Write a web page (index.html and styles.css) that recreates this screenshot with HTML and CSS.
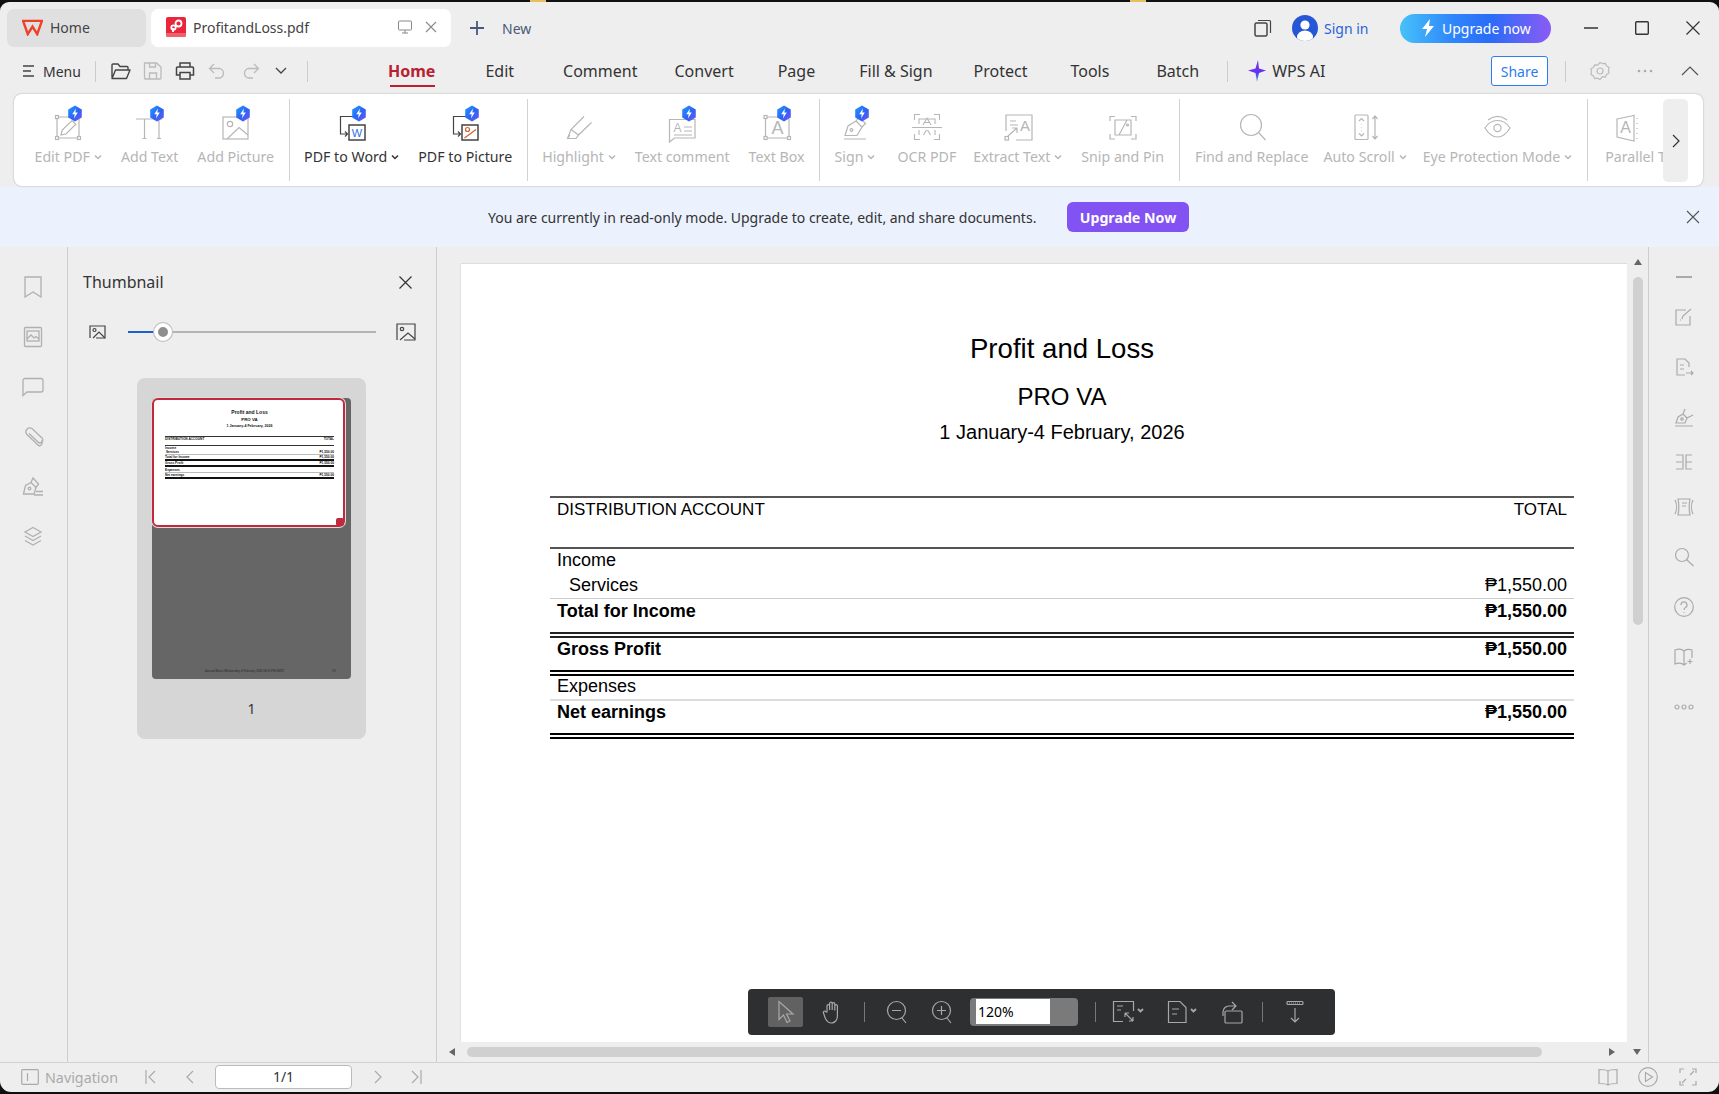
FILE: index.html
```html
<!DOCTYPE html>
<html lang="en">
<head>
<meta charset="utf-8">
<title>ProfitandLoss.pdf</title>
<link rel="stylesheet" href="styles.css">
</head>
<body>
<svg class="defs" width="0" height="0" aria-hidden="true">
  <defs>
    <linearGradient id="gb" x1="0" y1="0" x2="1" y2="1"><stop offset="0" stop-color="#1f9bff"/><stop offset=".55" stop-color="#2c62f5"/><stop offset="1" stop-color="#7a55f2"/></linearGradient>
    <linearGradient id="gai" x1="0" y1="0" x2="0" y2="1"><stop offset="0" stop-color="#8a2be8"/><stop offset=".6" stop-color="#5b35ee"/><stop offset="1" stop-color="#35b8f5"/></linearGradient>
    <symbol id="badge" viewBox="0 0 16 17"><path d="M8 .5 14.8 4.4v8.2L8 16.500 1.200 12.600V4.400z" fill="url(#gb)"/><path d="M9 3.500 5.200 9.300h2.500L7 13.500l3.800-5.900H8.300z" fill="#fff"/></symbol>
    <symbol id="caret" viewBox="0 0 8 6"><path d="M1 1.500 4 4.500 7 1.500" fill="none" stroke="currentColor" stroke-width="1.500"/></symbol>
  </defs>
</svg>
<div class="strip"></div>
<div class="window">
  <header class="titlebar">
    <div class="tab tab-home">
      <svg class="tab-logo" viewBox="0 0 22 18"><path d="M1 2h20l-5 14-5-8-5 8z" fill="none" stroke="#f0412b" stroke-width="2.600" stroke-linejoin="miter"/></svg>
      <span>Home</span>
    </div>
    <div class="tab tab-doc">
      <svg class="tab-pdf" viewBox="0 0 20 20"><rect width="20" height="20" rx="2" fill="#e8273c"/><path d="M0 16h20v2a2 2 0 0 1-2 2H2a2 2 0 0 1-2-2z" fill="#f2606e"/><circle cx="12.500" cy="6.500" r="3" fill="none" stroke="#fff" stroke-width="1.800"/><circle cx="7.500" cy="10.500" r="2.200" fill="none" stroke="#fff" stroke-width="1.800"/><path d="M7 15V11" stroke="#fff" stroke-width="1.800"/></svg>
      <span class="tab-name">ProfitandLoss.pdf</span>
      <svg class="tab-mon" viewBox="0 0 14 14"><rect x=".5" y="1" width="13" height="9" rx="1" fill="none" stroke="#888"/><path d="M7 10v3M4 13h6" stroke="#888"/></svg>
      <svg class="tab-x" viewBox="0 0 12 12"><path d="M1 1l10 10M11 1 1 11" stroke="#888" stroke-width="1.100"/></svg>
    </div>
    <svg class="plus" viewBox="0 0 14 14"><path d="M7 0v14M0 7h14" stroke="#46597c" stroke-width="1.800"/></svg>
    <span class="new">New</span>
    <div class="spacer"></div>
    <svg class="tb-copy" viewBox="0 0 18 18"><rect x="1" y="4" width="12" height="13" rx="1.500" fill="none" stroke="#444" stroke-width="1.500"/><path d="M4 1.500h11.500a1 1 0 0 1 1 1V14" fill="none" stroke="#444" stroke-width="1.200"/></svg>
    <svg class="tb-user" viewBox="0 0 26 26"><defs><clipPath id="uc"><circle cx="13" cy="13" r="13"/></clipPath></defs><circle cx="13" cy="13" r="13" fill="#2456d6"/><g clip-path="url(#uc)"><circle cx="13" cy="10" r="4.600" fill="#fff"/><ellipse cx="13" cy="22" rx="8" ry="6.500" fill="#fff"/></g></svg>
    <span class="signin">Sign in</span>
    <div class="upgrade">
      <svg class="bolt" viewBox="0 0 14 18"><path d="M9 0 1 10h5l-2 8 9-11H8z" fill="#fff"/></svg>
      <span>Upgrade now</span>
    </div>
    <svg class="win win-min" viewBox="0 0 14 14"><path d="M0 7h14" stroke="#333" stroke-width="1.300"/></svg>
    <svg class="win win-max" viewBox="0 0 14 14"><rect x=".7" y=".7" width="12.600" height="12.600" rx="1" fill="none" stroke="#333" stroke-width="1.400"/></svg>
    <svg class="win win-close" viewBox="0 0 14 14"><path d="M.5.5l13 13M13.500.5l-13 13" stroke="#333" stroke-width="1.200"/></svg>
  </header>

  <nav class="menubar">
    <svg class="m-burger" viewBox="0 0 11 12"><path d="M0 1h11M0 6h8M0 11h11" stroke="#444" stroke-width="1.300"/></svg>
    <span class="m-menu">Menu</span>
    <i class="vsep vsep-a"></i>
    <svg class="q q-folder" viewBox="0 0 20 17"><path d="M1 15V2.500a1 1 0 0 1 1-1h5l2 2.500h7a1 1 0 0 1 1 1V7M1 16h14.500L19 7.500H4.500L1 16z" fill="none" stroke="#444" stroke-width="1.400" stroke-linejoin="round"/></svg>
    <svg class="q q-save" viewBox="0 0 20 18"><path d="M1.500 1h12L18 5v11a1 1 0 0 1-1 1H2.500a1 1 0 0 1-1-1zM6.500 17v-6h7v6M6.500 1v4h6V1" fill="none" stroke="#bbb" stroke-width="1.300"/></svg>
    <svg class="q q-print" viewBox="0 0 20 18"><path d="M5 5V1h10v4M5 13H1.500V6a1 1 0 0 1 1-1h15a1 1 0 0 1 1 1v7H15M5 10.500h10V17H5z" fill="none" stroke="#444" stroke-width="1.500"/></svg>
    <svg class="q q-undo" viewBox="0 0 20 16"><path d="M6 1 1.500 5.500 6 10M2 5.500h10a5 5 0 0 1 0 9.500H7" fill="none" stroke="#bbb" stroke-width="1.300"/></svg>
    <svg class="q q-redo" viewBox="0 0 20 16"><path d="M14 1l4.500 4.500L14 10M18 5.500H8a5 5 0 0 0 0 9.500h5" fill="none" stroke="#bbb" stroke-width="1.300"/></svg>
    <svg class="q q-chev" viewBox="0 0 12 8"><path d="M1 1l5 5 5-5" fill="none" stroke="#444" stroke-width="1.300"/></svg>
    <i class="vsep vsep-b"></i>
    <div class="tabs">
      <span class="mt mt-on">Home</span>
      <span class="mt">Edit</span>
      <span class="mt">Comment</span>
      <span class="mt">Convert</span>
      <span class="mt">Page</span>
      <span class="mt">Fill &amp; Sign</span>
      <span class="mt">Protect</span>
      <span class="mt">Tools</span>
      <span class="mt">Batch</span>
    </div>
    <i class="vsep vsep-c"></i>
    <svg class="ai-star" viewBox="0 0 18 22"><path d="M10 0 11 8.500 18 10.500 11 13 9 22 7.500 13 0 10.500 7.500 8.500z" fill="url(#gai)"/></svg>
    <span class="ai-txt">WPS AI</span>
    <div class="spacer"></div>
    <span class="share">Share</span>
    <i class="vsep vsep-d"></i>
    <svg class="m-gear" viewBox="0 0 20 20"><path d="M10 1.500l2.500 1.200 2.800-.3 1.300 2.500 2.400 1.500-.5 2.800.5 2.800-2.400 1.500-1.300 2.500-2.800-.3L10 18.500l-2.500-1.300-2.800.3-1.300-2.500L1 13.500l.5-2.800L1 7.900l2.400-1.500 1.300-2.500 2.800.3z" fill="none" stroke="#bbb" stroke-width="1.200"/><circle cx="10" cy="10" r="3" fill="none" stroke="#bbb" stroke-width="1.200"/></svg>
    <svg class="m-dots" viewBox="0 0 16 4"><circle cx="2" cy="2" r="1.300" fill="#aaa"/><circle cx="8" cy="2" r="1.300" fill="#aaa"/><circle cx="14" cy="2" r="1.300" fill="#aaa"/></svg>
    <svg class="m-up" viewBox="0 0 18 10"><path d="M1 9l8-8 8 8" fill="none" stroke="#555" stroke-width="1.200"/></svg>
  </nav>

  <section class="ribbon">
    <div class="rb-list">
      <div class="rb dis">
        <div class="rb-ic"><svg viewBox="0 0 32 32"><path d="M6 6h20M6 27h20M5 8v17M27 8v17"/><rect x="3.500" y="4.500" width="3" height="3"/><rect x="3.500" y="25.500" width="3" height="3"/><rect x="25.500" y="25.500" width="3" height="3"/><path d="M9 24l1.200-5L20 9.500l3.800 3.800L14 23z"/></svg><svg class="badge"><use href="#badge"/></svg></div>
        <span class="rb-t">Edit PDF <svg class="car"><use href="#caret"/></svg></span>
      </div>
      <div class="rb dis">
        <div class="rb-ic"><svg viewBox="0 0 32 32"><path d="M2 8h26M10.500 8v19M25 8v19M8.500 27.500h4M23 27.500h4"/></svg><svg class="badge"><use href="#badge"/></svg></div>
        <span class="rb-t">Add Text</span>
      </div>
      <div class="rb dis">
        <div class="rb-ic"><svg viewBox="0 0 32 32"><rect x="3" y="6" width="25" height="22"/><circle cx="10" cy="13" r="2.700"/><path d="M7 28 19 16.500 28 24"/></svg><svg class="badge"><use href="#badge"/></svg></div>
        <span class="rb-t">Add Picture</span>
      </div>
      <i class="rb-sep"></i>
      <div class="rb act">
        <div class="rb-ic"><svg viewBox="0 0 32 32"><path d="M17 5.500H4.500V23H11M9 20.500l2.500 2.500L9 25.500"/><rect x="13" y="14" width="16" height="15" stroke-width="1.500"/><text class="ic-w" x="21" y="25.500">W</text></svg><svg class="badge"><use href="#badge"/></svg></div>
        <span class="rb-t">PDF to Word <svg class="car"><use href="#caret"/></svg></span>
      </div>
      <div class="rb act">
        <div class="rb-ic"><svg viewBox="0 0 32 32"><path d="M17 5.500H4.500V23H11M9 20.500l2.500 2.500L9 25.500"/><rect x="13" y="14" width="16" height="15" stroke-width="1.500"/><circle class="ic-o" cx="18.500" cy="18.500" r="2"/><path class="ic-o" d="M15.500 27 27 18.500"/></svg><svg class="badge"><use href="#badge"/></svg></div>
        <span class="rb-t">PDF to Picture</span>
      </div>
      <i class="rb-sep"></i>
      <div class="rb dis">
        <div class="rb-ic"><svg viewBox="0 0 32 32"><path d="M21 5.500 8 18.500 4.500 27.500H13l2.500-3.500L28.500 11.500M8 18.500l7.500 5.500M7 24l-2.500 3.500"/></svg></div>
        <span class="rb-t">Highlight <svg class="car"><use href="#caret"/></svg></span>
      </div>
      <div class="rb dis">
        <div class="rb-ic"><svg viewBox="0 0 32 32"><path d="M3.500 8.500H29V27H8.500l-5 4z"/><text class="ic-a" x="11.500" y="21" font-size="12">A</text><path d="M18 16h8M18 20h8M8 24h18"/></svg><svg class="badge"><use href="#badge"/></svg></div>
        <span class="rb-t">Text comment</span>
      </div>
      <div class="rb dis">
        <div class="rb-ic"><svg viewBox="0 0 32 32"><path d="M6 6h20M6 27h20M4.500 8v17M28 8v17"/><rect x="3" y="4.500" width="3" height="3"/><rect x="3" y="25.500" width="3" height="3"/><rect x="26.500" y="25.500" width="3" height="3"/><text class="ic-a" x="16.500" y="23" font-size="18">A</text></svg><svg class="badge"><use href="#badge"/></svg></div>
        <span class="rb-t">Text Box</span>
      </div>
      <i class="rb-sep"></i>
      <div class="rb dis">
        <div class="rb-ic"><svg viewBox="0 0 32 32"><path d="M5 28h22M6 24.500 9 15l8-5 6 6-5 8.500zM17 10l3-4 6.500 6.500L23 16"/><circle cx="12.500" cy="19" r="1.400"/></svg><svg class="badge"><use href="#badge"/></svg></div>
        <span class="rb-t">Sign <svg class="car"><use href="#caret"/></svg></span>
      </div>
      <div class="rb dis rb-ocr">
        <div class="rb-ic"><svg viewBox="0 0 32 32"><path d="M3.500 9V3.500H9M23 3.500h5.500V9M3.500 23v5.500H9M23 28.500h5.500V23M1 16.500h30M12 14l4-7 4 7M13.500 11.500h5M8 19v5M24 19v5M12.500 24l3-5M19.500 24l-3-5M8 13V8h16v5" stroke-width="1.100"/></svg></div>
        <span class="rb-t">OCR PDF</span>
      </div>
      <div class="rb dis rb-ext">
        <div class="rb-ic"><svg viewBox="0 0 32 32"><path d="M4 20V4h26v25H14"/><path d="M8 10h6M8 14h8"/><text class="ic-a" x="23" y="20" font-size="15">A</text><rect x="3" y="25.500" width="3.500" height="3.500"/><path d="M6 25l9-8M10 17h5v5"/></svg></div>
        <span class="rb-t">Extract Text <svg class="car"><use href="#caret"/></svg></span>
      </div>
      <div class="rb dis">
        <div class="rb-ic"><svg viewBox="0 0 32 32"><path d="M3 10V5.500h5M24 5.500h5V10M3 23v5h5M24 28h5v-5M8 9h16v15H8zM20 9 12 24"/><circle cx="20.500" cy="14" r="1"/></svg></div>
        <span class="rb-t">Snip and Pin</span>
      </div>
      <i class="rb-sep"></i>
      <div class="rb dis rb-find">
        <div class="rb-ic"><svg viewBox="0 0 32 32"><circle cx="15" cy="14" r="10.500"/><path d="M22.500 21.500 29.500 29"/></svg></div>
        <span class="rb-t">Find and Replace</span>
      </div>
      <div class="rb dis rb-auto">
        <div class="rb-ic"><svg viewBox="0 0 32 32"><rect x="6" y="4" width="13" height="24.500" rx="1"/><path d="M10 10l2.500-2.500L15 10M10 22.500l2.500 2.500 2.500-2.500M12.500 13v.6M12.500 16v.6M12.500 19v.6M26 5v23M23.500 8 26 5l2.500 3M23.500 25 26 28l2.500-3"/></svg></div>
        <span class="rb-t">Auto Scroll <svg class="car"><use href="#caret"/></svg></span>
      </div>
      <div class="rb dis rb-eye">
        <div class="rb-ic"><svg viewBox="0 0 32 32"><path d="M4 17c3-5 7.500-7.500 12.500-7.500S26 12 29 17c-3 5-7.500 9-12.500 9S7 22 4 17z"/><circle cx="16.500" cy="17" r="3.600"/><path d="M7 9c6-4.500 13-4.500 19 0"/></svg></div>
        <span class="rb-t">Eye Protection Mode <svg class="car"><use href="#caret"/></svg></span>
      </div>
      <i class="rb-sep"></i>
      <div class="rb dis rb-par">
        <div class="rb-ic"><svg viewBox="0 0 32 32"><path d="M-3 8 14 4.500V30L-3 26zM17 7v1M17 12v1M17 17v1M17 22v1M17 27v1"/><text class="ic-a" x="5.500" y="22" font-size="16">A</text></svg></div>
        <span class="rb-t">Parallel T</span>
      </div>
    </div>
    <div class="rb-more"><svg viewBox="0 0 8 14"><path d="M1 1l6 6-6 6" fill="none" stroke="#333" stroke-width="1.200"/></svg></div>
  </section>

  <div class="banner">
    <span class="banner-msg">You are currently in read-only mode. Upgrade to create, edit, and share documents.</span>
    <span class="banner-btn">Upgrade Now</span>
    <svg class="banner-x" viewBox="0 0 14 14"><path d="M1 1l12 12M13 1 1 13" stroke="#555" stroke-width="1.100"/></svg>
  </div>

  <main class="main">
    <aside class="rail">
      <div class="rail-i"><svg viewBox="0 0 20 22"><path d="M2 1h16v20l-8-5-8 5z"/></svg></div>
      <div class="rail-i"><svg viewBox="0 0 20 22"><rect x="1.500" y="1.500" width="17" height="19" rx="1"/><rect x="4" y="5" width="12" height="10"/><path d="M4 13l4-4 3 3 2-1.500 3 2.500"/></svg></div>
      <div class="rail-i"><svg viewBox="0 0 22 20"><path d="M3 1.500h16a2 2 0 0 1 2 2V13a2 2 0 0 1-2 2H5l-4 3.500V3.500a2 2 0 0 1 2-2z"/></svg></div>
      <div class="rail-i"><svg viewBox="0 0 22 22"><path d="M17 20 4.500 8A4 4 0 0 1 10 2.500l10 9.500a2.800 2.800 0 0 1-4 4L7 7.500"/><path d="M19.500 14.500a3.500 3.500 0 0 1-2.500 5.500"/></svg></div>
      <div class="rail-i"><svg viewBox="0 0 22 22"><path d="M1.500 18l2-8.500 5.500-3 5 5-2 6.500zM9 6.500 11 2l5.500 6-2.500 3.500"/><circle cx="7.500" cy="12.500" r="1.300"/><path d="M14 15.500h7M12 19h9"/></svg></div>
      <div class="rail-i"><svg viewBox="0 0 20 22"><path d="M10 1.500 18 6l-8 4.500L2 6zM2 10l8 4.500 8-4.500M2 14.500 10 19l8-4.500"/></svg></div>
    </aside>

    <aside class="thumbs">
      <div class="th-head">
        <span class="th-title">Thumbnail</span>
        <svg class="th-x" viewBox="0 0 13 13"><path d="M.5.5l12 12M12.500.5l-12 12" stroke="#333" stroke-width="1.200"/></svg>
      </div>
      <div class="th-slider">
        <svg class="th-small" viewBox="0 0 17 14"><path d="M1 13V1h15v12H7"/><circle cx="5.500" cy="5" r="1.500" class="th-fill"/><path d="M4 13l6-6 6 6"/></svg>
        <div class="track"><i class="knob"></i></div>
        <svg class="th-big" viewBox="0 0 20 18"><path d="M1 17V1h18v16H8"/><circle cx="6" cy="6" r="1.700"/><path d="M4 17l8-7 7 6"/></svg>
      </div>
      <div class="th-card">
        <div class="th-page">
          <div class="mini">
            <div class="mini-t1">Profit and Loss</div>
            <div class="mini-t2">PRO VA</div>
            <div class="mini-t3">1 January-4 February, 2026</div>
            <div class="mini-r mini-head"><span>DISTRIBUTION ACCOUNT</span><span>TOTAL</span></div>
            <div class="mini-r mini-h7"><span>Income</span></div>
            <div class="mini-r mini-sv"><span>&nbsp;Services</span><span>₱1,550.00</span></div>
            <div class="mini-r mini-tt"><span>Total for Income</span><span>₱1,550.00</span></div>
            <div class="mini-r mini-gp"><span>Gross Profit</span><span>₱1,550.00</span></div>
            <div class="mini-r mini-ex"><span>Expenses</span></div>
            <div class="mini-r mini-ne"><span>Net earnings</span><span>₱1,550.00</span></div>
            <i class="mini-dot"></i>
          </div>
          <div class="mini-foot"><span>Accrual Basis Wednesday, 4 February 2026 09:03 PM GMTZ</span><span>1/1</span></div>
        </div>
        <div class="th-num">1</div>
      </div>
    </aside>

    <section class="docarea">
      <div class="doc-top">
        <div class="page">
          <h1 class="p-t1">Profit and Loss</h1>
          <div class="p-t2">PRO VA</div>
          <div class="p-t3">1 January-4 February, 2026</div>
          <div class="tbl">
            <div class="r r-head"><span>DISTRIBUTION ACCOUNT</span><span>TOTAL</span></div>
            <div class="r r-inc"><span>Income</span></div>
            <div class="r r-srv"><span class="indent">Services</span><span>₱1,550.00</span></div>
            <div class="r r-tot"><span>Total for Income</span><span>₱1,550.00</span></div>
            <div class="r r-gro"><span>Gross Profit</span><span>₱1,550.00</span></div>
            <div class="r r-exp"><span>Expenses</span></div>
            <div class="r r-net"><span>Net earnings</span><span>₱1,550.00</span></div>
          </div>
        </div>
        <div class="vscroll">
          <i class="tri tri-up"></i>
          <i class="vthumb"></i>
        </div>
      </div>
      <div class="hscroll">
        <i class="tri tri-lf"></i>
        <i class="hthumb"></i>
        <div class="spacer"></div>
        <i class="tri tri-rt"></i>
        <i class="tri tri-dn"></i>
      </div>
      <div class="floatbar">
        <div class="fb-sel"><svg viewBox="0 0 20 24"><path d="M3 1.500v18l4.500-4.500 3.500 7.500 3-1.500-3.500-7h6.500z"/></svg></div>
        <svg class="fb-hand" viewBox="0 0 20 24"><path d="M5 12V6a1.300 1.300 0 0 1 2.600 0v4V3.500a1.300 1.300 0 0 1 2.600 0V10 4a1.300 1.300 0 0 1 2.600 0v6.500-4.500a1.300 1.300 0 0 1 2.600 0v10c0 4-2.500 7-6 7-3 0-4.500-1.500-6-4.500L1.500 13c-.8-1.600 1.600-2.700 2.500-1z"/></svg>
        <i class="fb-sep"></i>
        <svg class="fb-zoom" viewBox="0 0 22 24"><circle cx="10.500" cy="10.500" r="9"/><path d="M6 10.500h9M16 18l4 5"/></svg>
        <svg class="fb-zoom fb-zi" viewBox="0 0 22 24"><circle cx="10.500" cy="10.500" r="9"/><path d="M6 10.500h9M10.500 6v9M16 18l4 5"/></svg>
        <div class="fb-input"><span>120%</span></div>
        <i class="fb-sep fb-sep2"></i>
        <svg class="fb-fit" viewBox="0 0 32 24"><path d="M11 21.500H1.500V1.500h20V11"/><path d="M5 6h6M5 10h4M13 13l8 8M13 13v4M13 13h4M21 21v-4M21 21h-4"/><path d="M26 9l2.500 2.500L31 9" stroke-width="1.800"/></svg>
        <svg class="fb-pg" viewBox="0 0 30 24"><path d="M1.500 1.500H13l6 6v15H1.500zM5 9h7M5 14h5"/><path d="M24 9l2.500 2.500L29 9" stroke-width="1.800"/></svg>
        <svg class="fb-rot" viewBox="0 0 22 24"><rect x="4" y="11" width="17" height="12" rx="1"/><path d="M2 16V12a6 6 0 0 1 6-6h6M11 2l4 4-4 4"/></svg>
        <i class="fb-sep fb-sep3"></i>
        <svg class="fb-rul" viewBox="0 0 20 24"><rect x="2" y="1.500" width="16" height="3" rx="1"/><path d="M4 3h12" stroke-dasharray="1 1"/><path d="M10 8v14M6 18l4 4 4-4"/></svg>
      </div>
    </section>

    <aside class="rrail">
      <div class="rr rr-dash"><svg viewBox="0 0 18 4"><path d="M1 2h16" stroke-width="1.600"/></svg></div>
      <div class="rr"><svg viewBox="0 0 20 20"><path d="M16 9v9H2V3h10M8 12l1 -3 8-7M6 13h1"/></svg></div>
      <div class="rr"><svg viewBox="0 0 20 20"><path d="M15 10V6l-4-4H3v16h8M6 8h4M6 12h4M12 16h7M17 14l2 2-2 2"/></svg></div>
      <div class="rr"><svg viewBox="0 0 20 20"><path d="M2 16l2-6 5-3 4 4-2 5zM9 7l2-5M13 11l6-3M1 19h18"/><circle cx="8" cy="12" r="1.200"/></svg></div>
      <div class="rr rr-t rr-up"><svg viewBox="0 0 20 20"><path d="M2 3h7v14H2M2 10h6M18 3h-6v14h6M12 10h6"/></svg></div>
      <div class="rr rr-t"><svg viewBox="0 0 20 20"><path d="M4 2h12c-1 5-1 11 0 16H4c1-5 1-11 0-16zM8 6h5M8 9h4M1 3c2 4 2 10 0 14M19 3c-2 4-2 10 0 14"/></svg></div>
      <div class="rr rr-dn"><svg viewBox="0 0 20 20"><circle cx="8" cy="8" r="6.500"/><path d="M12.500 12.500 19.500 19"/></svg></div>
      <div class="rr"><svg viewBox="0 0 20 20"><circle cx="10" cy="10" r="9.300"/><path d="M7 8a3 3 0 1 1 4.500 2.500c-1 .6-1.500 1.200-1.500 2.500M10 15v.8"/></svg></div>
      <div class="rr"><svg viewBox="0 0 20 20"><path d="M10 4C8 2 4 2 1 3v14c3-1 7-1 9 1 1-1 2-1.500 3-1.800M10 4c2-2 6-2 8-1v8M10 4v14M16 12v5M13.500 14.500h5" /></svg></div>
      <div class="rr"><svg viewBox="0 0 20 6"><circle cx="3" cy="3" r="2"/><circle cx="10" cy="3" r="2"/><circle cx="17" cy="3" r="2"/></svg></div>
    </aside>
  </main>

  <footer class="status">
    <svg class="st-nav" viewBox="0 0 18 16"><rect x=".7" y=".7" width="16.600" height="14.600" rx="1"/><path d="M6.500 4v8"/></svg>
    <span class="st-lbl">Navigation</span>
    <svg class="st-first" viewBox="0 0 11 14"><path d="M1 0v14M10 1 4 7l6 6"/></svg>
    <svg class="st-prev" viewBox="0 0 8 14"><path d="M7 1 1 7l6 6"/></svg>
    <div class="st-page">1/1</div>
    <svg class="st-next" viewBox="0 0 8 14"><path d="M1 1l6 6-6 6"/></svg>
    <svg class="st-last" viewBox="0 0 11 14"><path d="M10 0v14M1 1l6 6-6 6"/></svg>
    <div class="spacer"></div>
    <svg class="st-book" viewBox="0 0 20 18"><path d="M10 3C8 1.500 4 1.500 1 1.500v14c3 0 7 0 9 1.500 2-1.500 6-1.500 9-1.500v-14c-3 0-7 0-9 1.500zM10 3v14"/></svg>
    <svg class="st-play" viewBox="0 0 20 20"><circle cx="10" cy="10" r="9.300"/><path d="M7.500 5.500v9l7-4.500z"/></svg>
    <svg class="st-full" viewBox="0 0 18 18"><path d="M1 5V1h4M13 1h4v4M1 13v4h4M13 17h4v-4M11 7l4-4M7 11l-4 4"/></svg>
  </footer>
</div>
</body>
</html>
```

FILE: styles.css
```css
* { box-sizing: border-box; }
html, body { margin: 0; padding: 0; }
body {
  width: 1719px; height: 1094px; overflow: hidden; background: #0f0f0f;
  font-family: "Noto Sans", "Open Sans", sans-serif; color: #333;
}
svg { display: block; flex: none; }
.defs { position: absolute; }
.spacer { flex: 1; }
.strip {
  height: 2px;
  background: linear-gradient(90deg, #111 530px, #e6c15a 530px, #e6c15a 546px, #111 546px, #111 1130px, #e6c15a 1130px, #e6c15a 1146px, #111 1146px);
}
.window {
  height: 1090px; background: #eeeeee; border-radius: 9px 9px 11px 11px; overflow: hidden;
  display: flex; flex-direction: column; margin-top: 0;
}

/* title bar */
.titlebar { height: 46px; flex: none; padding-top: 6px; display: flex; align-items: center; }
.tab { height: 38px; border-radius: 7px; display: flex; align-items: center; font-size: 14px; flex: none; padding-bottom: 2px; }
.tab-home { width: 139px; margin-left: 7px; background: #e0e0e0; padding-left: 15px; color: #444; }
.tab-logo { width: 21px; height: 17px; margin-right: 7px; }
.tab-doc { width: 300px; margin-left: 5px; background: #fff; padding-left: 15px; color: #444; }
.tab-pdf { width: 20px; height: 20px; margin-right: 7px; }
.tab-name { width: 205px; }
.tab-mon { width: 14px; height: 14px; margin-left: 0; }
.tab-x { width: 12px; height: 12px; margin-left: 13px; }
.plus { width: 14px; height: 14px; margin-left: 19px; }
.new { font-size: 14px; color: #4a5a78; margin-left: 18px; }
.tb-copy { width: 18px; height: 18px; }
.tb-user { width: 26px; height: 26px; margin-left: 20px; }
.signin { font-size: 14px; color: #2b63d9; margin-left: 6px; width: 46px; white-space: nowrap; }
.upgrade {
  width: 151px; height: 29px; margin-left: 30px; border-radius: 15px;
  background: linear-gradient(90deg, #46c1f9 0%, #2f86fb 35%, #2a6cf8 60%, #8b5bf5 100%);
  display: flex; align-items: center; padding-left: 21px; color: #fff; font-size: 14px;
}
.bolt { width: 14px; height: 18px; margin-right: 7px; }
.win { width: 14px; height: 14px; }
.win-min { margin-left: 33px; }
.win-max { margin-left: 37px; }
.win-close { margin-left: 37px; margin-right: 19px; }

/* menu bar */
.menubar { height: 46px; flex: none; display: flex; align-items: center; font-size: 16px; color: #333; }
.m-burger { width: 11px; height: 12px; margin-left: 23px; }
.m-menu { font-size: 14px; margin-left: 9px; width: 37px; }
.vsep { width: 1px; height: 21px; background: #ccc; flex: none; }
.vsep-a { margin-left: 15px; }
.q { height: 18px; width: 20px; }
.q-folder { margin-left: 15px; }
.q-save { margin-left: 12px; }
.q-print { margin-left: 12px; }
.q-undo { margin-left: 13px; }
.q-redo { margin-left: 12px; }
.q-chev { width: 12px; height: 8px; margin-left: 15px; }
.vsep-b { margin-left: 20px; }
.tabs { display: flex; margin-left: 80px; height: 46px; align-items: center; }
.mt { position: relative; white-space: nowrap; }
.mt-on { color: #b8202f; font-weight: 700; }
.mt-on::after { content: ""; position: absolute; left: 2px; right: 0; bottom: -5px; height: 2px; background: #b8202f; }
.mt:nth-child(2) { margin-left: 50px; }
.mt:nth-child(3) { margin-left: 49px; }
.mt:nth-child(4) { margin-left: 37px; }
.mt:nth-child(5) { margin-left: 44px; }
.mt:nth-child(6) { margin-left: 44px; }
.mt:nth-child(7) { margin-left: 41px; }
.mt:nth-child(8) { margin-left: 43px; }
.mt:nth-child(9) { margin-left: 47px; }
.vsep-c { margin-left: 28px; }
.ai-star { width: 18px; height: 22px; margin-left: 20px; }
.ai-txt { margin-left: 6px; }
.share {
  width: 57px; height: 30px; border: 1px solid #2b7cf0; border-radius: 3px; background: #fff;
  color: #2b7cf0; font-size: 14px; display: flex; align-items: center; justify-content: center;
}
.vsep-d { margin-left: 17px; }
.m-gear { width: 20px; height: 20px; margin-left: 24px; }
.m-dots { width: 16px; height: 4px; margin-left: 27px; }
.m-up { width: 18px; height: 10px; margin-left: 28px; margin-right: 20px; }

/* ribbon */
.ribbon {
  height: 92px; flex: none; margin: 0 16px 0 14px; background: #fff; border-radius: 8px;
  box-shadow: 0 0 2px rgba(0,0,0,.3); position: relative; overflow: hidden;
}
.rb-list { display: flex; height: 100%; padding: 5px 0 5px 11px; white-space: nowrap; }
.rb { display: flex; flex-direction: column; align-items: center; padding: 0 9.5px; flex: none; position: relative; }
.rb-ocr { margin-left: 3px; }
.rb-ext { margin-left: -2px; }
.rb-find { margin-left: 1px; }
.rb-auto { margin-left: -4px; }
.rb-eye { margin-left: -3px; }
.rb-par { margin-left: 3px; }
.rb-ic { width: 32px; height: 32px; margin-top: 12px; position: relative; }
.rb-ic > svg:first-child { width: 32px; height: 32px; overflow: visible; fill: none; stroke: currentColor; stroke-width: 1.200; }
.badge { position: absolute; width: 16px; height: 17px; left: 15px; top: -6px; }
.rb-t { font-size: 14.2px; line-height: 20px; margin-top: 4px; display: flex; align-items: center; gap: 0; }
.car { width: 8px; height: 6px; margin-left: 4px; color: inherit; }
.dis { color: #b6b6b6; }
.act { color: #444; }
.act .rb-t { color: #333; }
.act .car { color: #333; }
.rb-sep { width: 1px; background: #d2d2d2; flex: none; margin: 0 5px; }
.ic-w { font: 400 11px "Liberation Sans", sans-serif; fill: #2f6fe0; stroke: none; text-anchor: middle; }
.ic-o { stroke: #d2622a; }
.ic-a { font-family: "Liberation Sans", sans-serif; fill: #b6b6b6; stroke: none; text-anchor: middle; }
.rb-more {
  position: absolute; right: 15px; top: 5px; width: 25px; height: 83px; background: #eeeeee;
  border-radius: 5px; display: flex; align-items: center; justify-content: center;
}
.rb-more svg { width: 8px; height: 14px; }

/* banner */
.banner {
  height: 60px; flex: none; margin-top: 1px; background: #ebf1fd; display: flex; align-items: center;
  padding-left: 488px; font-size: 14px; color: #333;
}
.banner-msg { width: 579px; white-space: nowrap; }
.banner-btn {
  width: 122px; height: 30px; background: #8352f2; color: #fff; font-weight: 700; font-size: 14.2px; border-radius: 6px;
  display: flex; align-items: center; justify-content: center;
}
.banner-x { width: 14px; height: 14px; margin-left: 497px; }

/* main */
.main { height: 815px; flex: none; display: flex; }
.rail { width: 68px; flex: none; border-right: 1px solid #cdcdcd; padding-top: 15px; }
.rail-i { height: 50px; display: flex; align-items: center; justify-content: center; padding-right: 1px; }
.rail-i svg { width: 22px; height: 22px; fill: none; stroke: #b0b0b0; stroke-width: 1.300; }

.thumbs { width: 369px; flex: none; border-right: 1px solid #cdcdcd; padding: 0 0 0 15px; }
.th-head { height: 70px; display: flex; align-items: center; padding-top: 0; }
.th-title { font-size: 16px; color: #333; width: 316px; }
.th-x { width: 13px; height: 13px; }
.th-slider { height: 30px; display: flex; align-items: center; margin-top: 0; }
.th-small { width: 17px; height: 14px; margin-left: 6px; fill: none; stroke: #444; stroke-width: 1.200; }
.th-big { width: 20px; height: 18px; margin-left: 20px; fill: none; stroke: #444; stroke-width: 1.200; }
.track {
  width: 248px; height: 2px; margin-left: 22px; position: relative;
  background: linear-gradient(90deg, #2060cc 26px, #b4b4b4 26px);
}
.knob {
  position: absolute; left: 26px; top: -8px; width: 18px; height: 18px; border-radius: 50%;
  background: #8f8f8f; border: 4px solid #fff; box-shadow: 0 0 0 1px #bbb;
}
.th-card {
  width: 229px; height: 361px; margin: 31px 0 0 54px; background: #d6d6d6; border-radius: 8px;
  padding: 20px 15px 0 15px;
}
.th-page { width: 199px; height: 281px; background: #666; border-radius: 4px; position: relative; }
.mini {
  width: 193px; height: 129px; background: #fff; border: 2px solid #c12a3c; border-radius: 6px;
  padding: 9px 9px 0 11px; position: relative; box-shadow: 0 0 0 1px #ddd; color: #111;
  font-family: "Liberation Sans", sans-serif; font-size: 3.200px; line-height: 4px; font-weight: 700;
}
.mini-t1 { text-align: center; font-size: 5px; line-height: 6px; }
.mini-t2 { text-align: center; font-size: 4.400px; line-height: 5px; margin-top: 2px; }
.mini-t3 { text-align: center; font-size: 3.600px; line-height: 4px; margin-top: 2px; }
.mini-r { display: flex; justify-content: space-between; }
.mini-head { border-top: 1px solid #333; height: 9px; margin-top: 8px; }
.mini-h7 { border-top: 1px solid #333; }
.mini-sv { border-bottom: 1px solid #bbb; }
.mini-tt { border-bottom: 2px solid #111; height: 6px; }
.mini-gp { border-bottom: 2px solid #111; height: 6px; }
.mini-ex { height: 6px; border-bottom: 1px solid #bbb; padding-top: 1px; }
.mini-ne { border-bottom: 2px solid #111; height: 6px; }
.mini-dot { position: absolute; right: -1px; bottom: -1px; width: 8px; height: 8px; background: #c12a3c; border-radius: 2px; }
.mini-foot {
  position: absolute; left: 53px; right: 15px; bottom: 6px; display: flex; justify-content: space-between;
  font: 700 2.800px/4px "Liberation Sans", sans-serif; color: #3a3a3a;
}
.th-num { text-align: center; font-size: 14px; line-height: 20px; margin-top: 20px; color: #333; }

/* document */
.docarea { width: 1211px; flex: none; display: flex; flex-direction: column; position: relative; }
.doc-top { height: 795px; display: flex; }
.page {
  flex: 1; margin: 17px 0 0 24px; background: #fff; box-shadow: 0 -1px 0 #ddd, -1px 0 0 #e2e2e2;
  padding: 68px 53px 0 89px; font-family: "Liberation Sans", Arial, sans-serif; color: #000;
}
.p-t1 { margin: 0; font-weight: 400; font-size: 27.6px; line-height: 34px; text-align: center; }
.p-t2 { font-size: 24px; line-height: 30px; margin-top: 16px; text-align: center; }
.p-t3 { font-size: 20px; line-height: 26px; margin-top: 7px; text-align: center; }
.tbl { margin-top: 51px; font-size: 18px; line-height: 22px; }
.r { display: flex; justify-content: space-between; padding: 0 7px; }
.r-head { font-size: 17px; border-top: 2px solid #555; border-bottom: 2px solid #555; height: 53px; padding-top: 1px; }
.r-srv { line-height: 26px; border-bottom: 1px solid #ccc; padding-top: 1px; }
.indent { padding-left: 12px; }
.r-tot { font-weight: 700; line-height: 24px; height: 39px; border-bottom: 6px double #222; }
.r-gro { font-weight: 700; height: 38px; border-bottom: 6px double #000; }
.r-exp { height: 25px; line-height: 20px; border-bottom: 2px solid #ddd; }
.r-net { font-weight: 700; height: 38px; border-bottom: 6px double #000; }
.vscroll { width: 21px; flex: none; display: flex; flex-direction: column; align-items: center; padding: 12px 0 0; }
.vthumb { width: 10px; height: 348px; background: #d0d0d0; border-radius: 5px; margin-top: 12px; }
.tri { width: 0; height: 0; border: 0 solid transparent; display: block; flex: none; }
.tri-up { border-width: 0 4px 6px; border-bottom-color: #666; }
.tri-dn { border-width: 6px 4px 0; border-top-color: #666; margin-left: 18px; }
.tri-lf { border-width: 4px 6px 4px 0; border-right-color: #666; }
.tri-rt { border-width: 4px 0 4px 6px; border-left-color: #666; }
.hscroll { height: 20px; display: flex; align-items: center; padding: 0 7px 0 12px; }
.hthumb { width: 1075px; height: 10px; background: #d0d0d0; border-radius: 5px; margin-left: 12px; }

.floatbar {
  position: absolute; left: 311px; top: 742px; width: 587px; height: 46px; background: #2e2f31;
  border-radius: 4px; display: flex; align-items: center; padding-left: 20px;
}
.floatbar svg { fill: none; stroke: #a8a8a8; stroke-width: 1.200; }
.fb-sel { width: 35px; height: 30px; background: #616161; border-radius: 2px; display: flex; align-items: center; justify-content: center; }
.fb-sel svg { width: 20px; height: 24px; }
.fb-hand { width: 20px; height: 24px; margin-left: 19px; }
.fb-sep { width: 1px; height: 20px; background: #777; flex: none; margin-left: 22px; }
.fb-zoom { width: 22px; height: 24px; margin-left: 21px; }
.fb-zi { margin-left: 23px; }
.fb-input { width: 108px; height: 28px; margin-left: 17px; background: #7a7a7a; border-radius: 4px; padding: 1px 0 0 6px; }
.fb-input span { display: block; width: 74px; height: 25px; background: #fff; color: #000; font-size: 14px; line-height: 25px; padding-left: 2px; }
.fb-sep2 { margin-left: 17px; }
.fb-fit { width: 32px; height: 24px; margin-left: 16px; }
.fb-pg { width: 30px; height: 24px; margin-left: 23px; }
.fb-rot { width: 22px; height: 24px; margin-left: 24px; }
.fb-sep3 { margin-left: 19px; }
.fb-rul { width: 20px; height: 24px; margin-left: 22px; }

.rrail { flex: 1; border-left: 1px solid #cdcdcd; padding: 20px 0 0 0; }
.rr { height: 50px; display: flex; align-items: center; justify-content: center; }
.rr-t { height: 45px; }
.rr-up { margin-top: -3px; }
.rr-dn { margin-top: 3px; }
.rr svg { width: 20px; height: 20px; fill: none; stroke: #aaaaaa; stroke-width: 1.200; }
.rr-dash { height: 20px; margin-bottom: 5px; }
.rr-dash svg { height: 4px; stroke: #999; }
.rr:last-child svg { height: 6px; }

/* status */
.status {
  height: 29px; flex: none; border-top: 1px solid #d2d2d2; display: flex; align-items: center;
  font-size: 14px; color: #aaa;
}
.status svg { fill: none; stroke: #aaa; stroke-width: 1.200; }
.st-nav { width: 18px; height: 16px; margin-left: 21px; }
.st-lbl { margin-left: 6px; width: 74px; white-space: nowrap; font-size: 14.3px; }
.st-first { width: 11px; height: 14px; margin-left: 26px; }
.st-prev { width: 8px; height: 14px; margin-left: 30px; }
.st-page {
  width: 137px; height: 24px; margin-left: 21px; background: #fff; border: 1px solid #bbb; border-radius: 4px;
  color: #333; text-align: center; line-height: 22px;
}
.st-next { width: 8px; height: 14px; margin-left: 22px; }
.st-last { width: 11px; height: 14px; margin-left: 29px; }
.st-book { width: 20px; height: 18px; }
.st-play { width: 20px; height: 20px; margin-left: 20px; }
.st-full { width: 18px; height: 18px; margin-left: 21px; margin-right: 22px; }
```
